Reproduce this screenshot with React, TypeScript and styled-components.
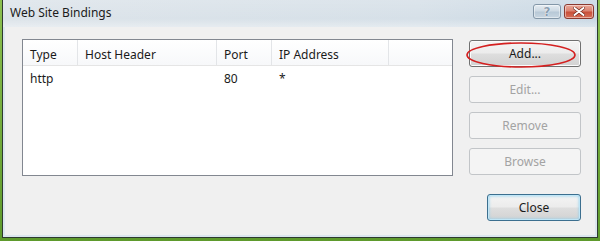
import React from "react";
import styled, { createGlobalStyle } from "styled-components";

const Global = createGlobalStyle`
  html, body { margin: 0; padding: 0; }
  body { width: 600px; height: 241px; overflow: hidden; font-family: "Noto Sans", "Open Sans", sans-serif; }
`;

const Desktop = styled.div`
  width: 600px;
  height: 241px;
  box-sizing: border-box;
  padding: 0 2px 3px 2px;
  background: linear-gradient(180deg, #8cc04f, #5e9a2c);
  display: flex;
`;

const Window = styled.div`
  flex: 1;
  display: flex;
  flex-direction: column;
  border: 1px solid #2e3a30;
  border-top: none;
  background: linear-gradient(90deg, #dde4ea 0%, #d6e0e8 70%, #c9d8e4 100%);
`;

const TitleBar = styled.div`
  height: 27px;
  flex: none;
  display: flex;
  align-items: flex-start;
  padding: 0 3px 0 7px;
  background: linear-gradient(180deg, rgba(255,255,255,0.15), rgba(255,255,255,0) 70%, rgba(255,255,255,0.35));
`;

const Title = styled.div`
  flex: 1;
  font-size: 12px;
  line-height: 16px;
  padding-top: 5px;
  color: #1b1b1b;
`;

const CaptionButtons = styled.div`
  display: flex;
  gap: 3px;
  padding-top: 4px;
`;

const CaptionButton = styled.div<{ $close?: boolean }>`
  width: ${(p) => (p.$close ? 30 : 28)}px;
  height: 15px;
  box-sizing: border-box;
  border: 1px solid ${(p) => (p.$close ? "#8a3a30" : "#8397a8")};
  border-radius: 3px;
  display: flex;
  align-items: center;
  justify-content: center;
  background: ${(p) =>
    p.$close
      ? "linear-gradient(180deg, #eaa898 0%, #dc8472 45%, #c8503a 55%, #d87058 100%)"
      : "linear-gradient(180deg, #e6edf3 0%, #cdd9e3 45%, #b8c9d7 55%, #c8d6e1 100%)"};
  box-shadow: inset 0 0 0 1px rgba(255,255,255,0.45);
`;

const HelpGlyph = styled.span`
  font-family: "DejaVu Sans", sans-serif;
  font-weight: bold;
  font-size: 12px;
  line-height: 12px;
  color: #8a9eb0;
  text-shadow: 0 0 1px #fff, 0 0 1px #fff;
`;

const Body = styled.div`
  flex: 1;
  display: flex;
  flex-direction: column;
  background: #f0f0f0;
  border: 2px solid #dbe6ee;
  border-top: none;
  padding: 12px 0 0 17px;
`;

const Main = styled.div`
  display: flex;
  align-items: flex-start;
`;

const ListView = styled.div`
  width: 431px;
  height: 137px;
  box-sizing: border-box;
  border: 1px solid #828790;
  background: #fff;
  font-size: 12px;
  color: #1a1a1a;
`;

const HeaderRow = styled.div`
  display: flex;
  height: 25px;
  border-bottom: 1px solid #e5e5e5;
  background: linear-gradient(180deg, #ffffff, #f7f8fa);
`;

const HeaderCell = styled.div<{ $w?: number }>`
  ${(p) => (p.$w ? `width: ${p.$w}px;` : "flex: 1;")}
  flex-shrink: 0;
  box-sizing: border-box;
  padding: 7px 0 0 7px;
  border-right: 1px solid #e3e5e8;
  line-height: 16px;
  &:last-child { border-right: none; }
`;

const DataRow = styled.div`
  display: flex;
  height: 22px;
`;

const Cell = styled.div<{ $w: number }>`
  width: ${(p) => p.$w}px;
  flex-shrink: 0;
  padding: 5px 0 0 7px;
  box-sizing: border-box;
  line-height: 16px;
`;

const ButtonColumn = styled.div`
  display: flex;
  flex-direction: column;
  gap: 9px;
  margin: 1px 0 0 16px;
`;

const Button = styled.div<{ $disabled?: boolean; $default?: boolean; $w?: number }>`
  position: relative;
  width: ${(p) => p.$w ?? 112}px;
  height: 27px;
  box-sizing: border-box;
  border-radius: 3px;
  font-size: 12px;
  display: flex;
  align-items: center;
  justify-content: center;
  border: 1px solid ${(p) => (p.$disabled ? "#c2c5c8" : p.$default ? "#3c6f8f" : "#707070")};
  color: ${(p) => (p.$disabled ? "#a3a3a3" : "#1a1a1a")};
  background: ${(p) =>
    p.$disabled
      ? "#f4f4f4"
      : "linear-gradient(180deg, #f4f4f4 0%, #ececec 48%, #dedede 52%, #d2d2d2 100%)"};
  box-shadow: ${(p) =>
    p.$disabled
      ? "none"
      : p.$default
      ? "inset 0 0 0 1px #bfe6f7, inset 0 0 3px 1px #8fd0ee"
      : "inset 0 0 0 1px #fbfbfb"};
`;

const Annotation = styled.svg`
  position: absolute;
  left: -4px;
  top: 1px;
  overflow: visible;
  pointer-events: none;
`;

const Footer = styled.div`
  display: flex;
  padding: 18px 0 0 465px;
`;

export default function App() {
  return (
    <>
      <Global />
      <Desktop>
        <Window>
          <TitleBar>
            <Title>Web Site Bindings</Title>
            <CaptionButtons>
              <CaptionButton>
                <HelpGlyph>?</HelpGlyph>
              </CaptionButton>
              <CaptionButton $close>
                <svg width="12" height="9" viewBox="0 0 12 9">
                  <path d="M1.5 1 L10.5 8 M10.5 1 L1.5 8" stroke="#6a2418" strokeWidth="3.2" strokeLinecap="round" />
                  <path d="M1.5 1 L10.5 8 M10.5 1 L1.5 8" stroke="#ffffff" strokeWidth="2" strokeLinecap="round" />
                </svg>
              </CaptionButton>
            </CaptionButtons>
          </TitleBar>
          <Body>
            <Main>
              <ListView>
                <HeaderRow>
                  <HeaderCell $w={55}>Type</HeaderCell>
                  <HeaderCell $w={139}>Host Header</HeaderCell>
                  <HeaderCell $w={55}>Port</HeaderCell>
                  <HeaderCell $w={117}>IP Address</HeaderCell>
                  <HeaderCell />
                </HeaderRow>
                <DataRow>
                  <Cell $w={55}>http</Cell>
                  <Cell $w={139}></Cell>
                  <Cell $w={55}>80</Cell>
                  <Cell $w={117}>*</Cell>
                </DataRow>
              </ListView>
              <ButtonColumn>
                <Button>
                  Add...
                  <Annotation width="110" height="26">
                    <ellipse cx="55" cy="13" rx="54" ry="12" fill="none" stroke="#d42020" strokeWidth="1.6" />
                  </Annotation>
                </Button>
                <Button $disabled>Edit...</Button>
                <Button $disabled>Remove</Button>
                <Button $disabled>Browse</Button>
              </ButtonColumn>
            </Main>
            <Footer>
              <Button $default $w={94}>Close</Button>
            </Footer>
          </Body>
        </Window>
      </Desktop>
    </>
  );
}
